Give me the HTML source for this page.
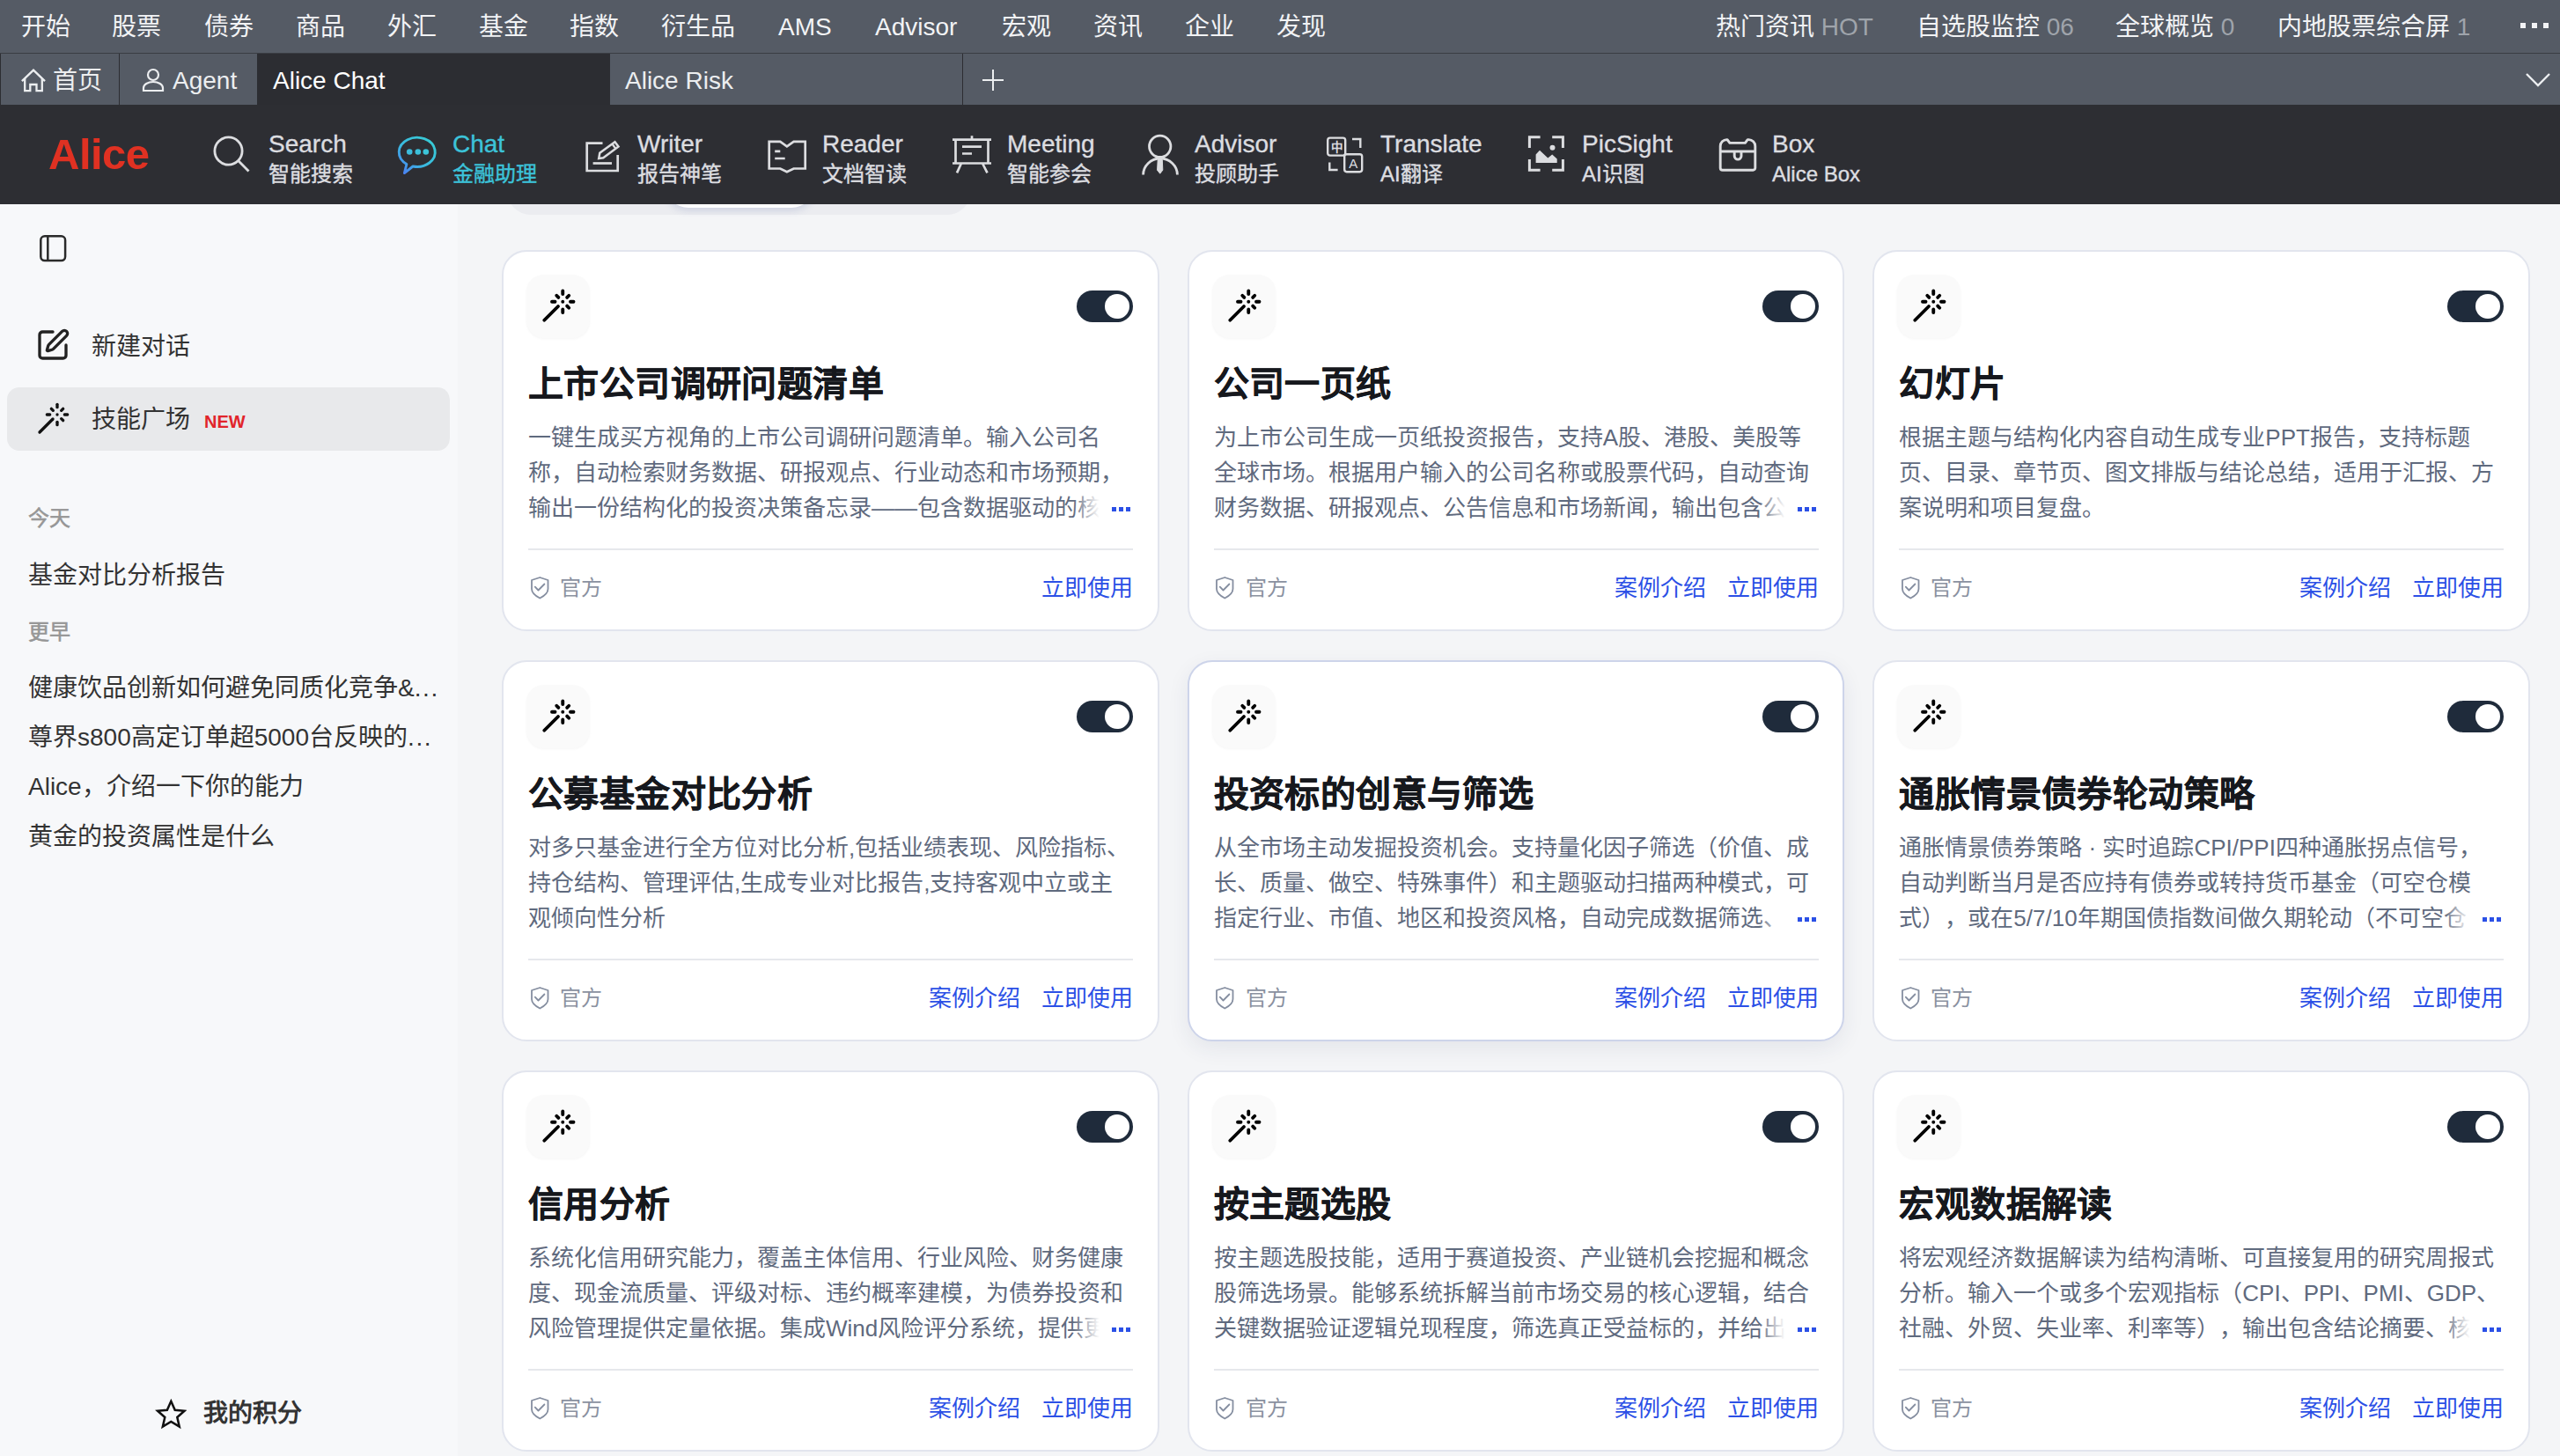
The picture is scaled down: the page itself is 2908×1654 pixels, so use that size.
<!DOCTYPE html>
<html lang="zh-CN"><head><meta charset="utf-8"><style>
*{box-sizing:border-box;margin:0;padding:0}
html,body{width:2908px;height:1654px;overflow:hidden}
body{font-family:"Liberation Sans", sans-serif;background:#f4f5f7;position:relative;color:#333;text-spacing-trim:space-all}
.abs{position:absolute}
#top{position:absolute;left:0;top:0;width:2908px;height:60px;background:#555b65}
#top .mi{position:absolute;top:1px;height:60px;line-height:60px;font-size:28px;color:#f2f3f5;white-space:nowrap}
#top .num{color:#9fa4ab}
#tabs{position:absolute;z-index:5;left:0;top:60px;width:2908px;height:59px;background:#2c2d32;border-top:1px solid #3a3d43}
.tab{position:absolute;top:0;height:58px;background:#555b65;color:#eceef0;font-size:28px;line-height:62px;white-space:nowrap}
#tool{position:absolute;z-index:5;left:0;top:119px;width:2908px;height:113px;background:#2d2e33}
.ti{position:absolute;top:0;height:113px}
.ti svg{position:absolute}
.tt{position:absolute;font-size:28px;color:#e3e4e7;white-space:nowrap;line-height:32px;-webkit-text-stroke:0.35px currentColor}
.ts{position:absolute;font-size:24px;color:#e3e4e7;white-space:nowrap;line-height:28px;-webkit-text-stroke:0.4px currentColor}
#side{position:absolute;left:0;top:232px;width:520px;height:1422px;background:#f7f8fa}
.sitem{position:absolute;font-size:28px;color:#333;white-space:nowrap;line-height:36px}
.slabel{position:absolute;font-size:24px;color:#969696;white-space:nowrap;line-height:30px;-webkit-text-stroke:0.6px #969696}
.card{position:absolute;width:746.67px;height:433px;background:#fff;border:2px solid #e2e5ee;border-radius:28px}
.card.hover{border-color:#cdd4ea;box-shadow:0 8px 24px rgba(40,50,90,0.08)}
.ibox{position:absolute;left:26px;top:26px;width:72px;height:72px;border-radius:20px;background:#fafafa;box-shadow:0 1px 3px rgba(0,0,0,0.04)}
.ibox svg{position:absolute;left:15px;top:15px;width:42px;height:42px}
.tog{position:absolute;left:651px;top:44px;width:64px;height:36px;border-radius:18px;background:#1f2b3b}
.knob{position:absolute;right:4px;top:4px;width:28px;height:28px;border-radius:50%;background:#fff}
.ctitle{position:absolute;left:28px;top:122px;font-size:40px;font-weight:bold;color:#16181d;line-height:56px;white-space:nowrap;letter-spacing:0.4px;-webkit-text-stroke:0.4px #16181d}
.desc{position:absolute;left:28px;top:191px;width:687px}
.ln{font-size:26px;line-height:40px;color:#5f6a7e;white-space:nowrap;height:40px;position:relative;overflow:hidden}
.ln.last .txt{display:inline-block}
.fade{position:absolute;right:0;top:0;width:68px;height:40px;background:linear-gradient(90deg,rgba(255,255,255,0) 0,#fff 44%)}
.more{position:absolute;right:2px;top:19px;width:22px;height:6px}
.more i{position:absolute;top:0;width:5px;height:5px;background:#2b50e6}
.more i:nth-child(1){left:0} .more i:nth-child(2){left:8px} .more i:nth-child(3){left:16px}
.divider{position:absolute;left:28px;top:337px;width:687px;height:1.5px;background:#e6e8ec}
.foot{position:absolute;left:28px;top:362px;width:687px;height:40px}
.shield{position:absolute;left:-4.5px;top:-0.5px;width:40px;height:40px}
.shield svg{width:40px;height:40px;display:block}
.off{position:absolute;left:36px;top:0;font-size:24px;line-height:40px;color:#8a91a0}
.links{position:absolute;right:0;top:0;white-space:nowrap}
.lnk{font-size:26px;line-height:40px;color:#2b50e6;margin-left:24px}
</style></head><body>
<div id="top"><div class="mi" style="left:24px">开始</div><div class="mi" style="left:127px">股票</div><div class="mi" style="left:232px">债券</div><div class="mi" style="left:336px">商品</div><div class="mi" style="left:440px">外汇</div><div class="mi" style="left:544px">基金</div><div class="mi" style="left:647px">指数</div><div class="mi" style="left:751px">衍生品</div><div class="mi" style="left:884px">AMS</div><div class="mi" style="left:994px">Advisor</div><div class="mi" style="left:1138px">宏观</div><div class="mi" style="left:1242px">资讯</div><div class="mi" style="left:1346px">企业</div><div class="mi" style="left:1450px">发现</div><div class="mi" style="left:1949px">热门资讯 <span class="num">HOT</span></div><div class="mi" style="left:2177px">自选股监控 <span class="num">06</span></div><div class="mi" style="left:2403px">全球概览 <span class="num">0</span></div><div class="mi" style="left:2587px">内地股票综合屏 <span class="num">1</span></div><div class="abs" style="left:2863px;top:26px;width:6px;height:6px;background:#f2f3f5"></div><div class="abs" style="left:2876px;top:26px;width:6px;height:6px;background:#f2f3f5"></div><div class="abs" style="left:2889px;top:26px;width:6px;height:6px;background:#f2f3f5"></div></div><div id="tabs"><div class="tab" style="left:1px;width:134px"><svg class="abs" style="left:17px;top:11px" width="40" height="40" viewBox="0 0 40 40" fill="none" stroke="#eceef0" stroke-width="2.3" stroke-linejoin="miter"><path d="M6.9 20.1 20 7.6 33 20.1"/><path d="M10.2 17V31.1H16.3V24H23.5V31.1H29.8V17"/></svg><span class="abs" style="left:59px;top:0">首页</span></div><div class="tab" style="left:136px;width:156px"><svg class="abs" style="left:25px;top:16px" width="26" height="28" viewBox="0 0 26 28" fill="none" stroke="#eceef0" stroke-width="2.2"><circle cx="13" cy="8" r="6"/><path d="M2 26v-3c0-4 5-7 11-7s11 3 11 7v3z"/></svg><span class="abs" style="left:60px;top:0">Agent</span></div><div class="tab" style="left:292px;width:401px;background:transparent;color:#fff"><span class="abs" style="left:18px;top:0">Alice Chat</span></div><div class="tab" style="left:693px;width:400px"><span class="abs" style="left:17px;top:0">Alice Risk</span></div><div class="tab" style="left:1093px;width:1815px;border-left:1px solid #2c2d32"><svg class="abs" style="left:21px;top:17px" width="26" height="26" viewBox="0 0 26 26" stroke="#eceef0" stroke-width="2"><path d="M13 1v24M1 13h24"/></svg><svg class="abs" style="left:1774px;top:21px" width="30" height="18" viewBox="0 0 30 18" fill="none" stroke="#eceef0" stroke-width="2.4"><path d="M2 2l13 13L28 2"/></svg></div></div><div id="tool"><div class="abs" style="left:55px;top:28px;font-size:49px;font-weight:bold;color:#e03122;line-height:56px;letter-spacing:-0.5px">Alice</div><svg class="abs" style="left:236px;top:31px" width="56" height="56" viewBox="0 0 56 56" fill="none" stroke="#dcdde0" stroke-width="2.8"><circle cx="23.5" cy="21.5" r="15.6"/><path d="M34.6 32.6 46.5 44.5"/></svg><div class="tt" style="left:305px;top:29px;color:#dcdde0">Search</div><div class="ts" style="left:305px;top:65px;color:#dcdde0">智能搜索</div><svg class="abs" style="left:450px;top:31px" width="56" height="56" viewBox="0 0 56 56" fill="none" stroke="#dcdde0" stroke-width="2.8"><defs><linearGradient id="cg" x1="0.9" y1="0.1" x2="0.1" y2="1"><stop offset="0" stop-color="#38cad6"/><stop offset="0.55" stop-color="#3ab9df"/><stop offset="1" stop-color="#4b80f2"/></linearGradient></defs><path d="M11.9 36.4 9.4 46.6 19 39A20.5 16.6 0 1 0 11.9 36.4Z" stroke="url(#cg)" stroke-width="2.9" stroke-linejoin="round"/><circle cx="15.2" cy="22.5" r="3.3" fill="#3cbcdc" stroke="none"/><circle cx="24.8" cy="22.5" r="3.3" fill="#3cc0da" stroke="none"/><circle cx="33.8" cy="22.5" r="3.3" fill="#3cc4d8" stroke="none"/></svg><div class="tt" style="left:514px;top:29px;color:#3cc3d9">Chat</div><div class="ts" style="left:514px;top:65px;color:#3cc3d9">金融助理</div><svg class="abs" style="left:660px;top:31px" width="56" height="56" viewBox="0 0 56 56" fill="none" stroke="#dcdde0" stroke-width="2.8"><path d="M24.5 12.7H6.7V44H41.7V26" stroke-width="2.7"/><path d="M13.6 35.5H35" stroke-width="2.7"/><path d="M20.2 30 21.3 23.8 38.5 11.2 42.5 16.6 25.3 29.2Z" stroke-width="2.5" stroke-linejoin="miter"/><path d="M35.4 13.5 39.4 18.9" stroke-width="2.3"/></svg><div class="tt" style="left:724px;top:29px;color:#dcdde0">Writer</div><div class="ts" style="left:724px;top:65px;color:#dcdde0">报告神笔</div><svg class="abs" style="left:865px;top:31px" width="56" height="56" viewBox="0 0 56 56" fill="none" stroke="#dcdde0" stroke-width="2.8"><path d="M8.7 10.9H21.3L28.9 16.3 36.6 10.9H49.7V41.5H36.6L28.9 45.3 21.3 41.5H8.7Z" stroke-width="2.7" stroke-linejoin="miter"/><path d="M15.2 21.8H21.3M15.2 30H26.7" stroke-width="2.7"/></svg><div class="tt" style="left:934px;top:29px;color:#dcdde0">Reader</div><div class="ts" style="left:934px;top:65px;color:#dcdde0">文档智读</div><svg class="abs" style="left:1075px;top:31px" width="56" height="56" viewBox="0 0 56 56" fill="none" stroke="#dcdde0" stroke-width="2.8"><path d="M7 8.7H51M29 4.3V8.7M10.5 8.7V35.5M47.5 8.7V35.5M7 35.5H51M17 35.5 12 46.4M41 35.5 46.5 46.4M18 16.7H40M18 24.5H29" stroke-width="2.7"/></svg><div class="tt" style="left:1144px;top:29px;color:#dcdde0">Meeting</div><div class="ts" style="left:1144px;top:65px;color:#dcdde0">智能参会</div><svg class="abs" style="left:1290px;top:31px" width="56" height="56" viewBox="0 0 56 56" fill="none" stroke="#dcdde0" stroke-width="2.8"><circle cx="27.7" cy="16.3" r="12.2"/><path d="M8.6 48.6A19.4 18.6 0 0 1 47.4 48.6"/><path d="M25.2 31.5H30.3L30.8 43.2 27.7 47.2 24.6 43.2Z" fill="#dcdde0" stroke-width="1"/></svg><div class="tt" style="left:1357px;top:29px;color:#dcdde0">Advisor</div><div class="ts" style="left:1357px;top:65px;color:#dcdde0">投顾助手</div><svg class="abs" style="left:1500px;top:31px" width="56" height="56" viewBox="0 0 56 56" fill="none" stroke="#dcdde0" stroke-width="2.8"><rect x="8.2" y="6.6" width="20" height="20" rx="2.6" stroke-width="2.4"/><rect x="27.2" y="25.2" width="20" height="20" rx="2.6" fill="#2c2d32" stroke-width="2.4"/><path d="M36 8H45.3V18M10.3 34.4V43H19.6" stroke-width="2.4"/><text x="18.2" y="22" font-size="13.5" font-weight="bold" fill="#dcdde0" stroke="none" text-anchor="middle">中</text><text x="37.3" y="40.5" font-size="15" fill="#dcdde0" stroke="none" text-anchor="middle" font-family="Liberation Sans, sans-serif">A</text></svg><div class="tt" style="left:1568px;top:29px;color:#dcdde0">Translate</div><div class="ts" style="left:1568px;top:65px;color:#dcdde0">AI翻译</div><svg class="abs" style="left:1730px;top:31px" width="56" height="56" viewBox="0 0 56 56" fill="none" stroke="#dcdde0" stroke-width="2.8"><path d="M19.6 5.8H7.4V18M33.2 5.8H45.4V18M7.4 31V43.3H19.6M45.4 31V43.3H33.2" stroke-width="3" stroke-linejoin="miter"/><circle cx="33.5" cy="17.8" r="3" fill="#dcdde0" stroke="none"/><path d="M14.6 25.6 19 20.7 28.3 29.5 33.2 25.6 38.7 30.6V35H14.6Z" fill="#dcdde0" stroke="none"/></svg><div class="tt" style="left:1797px;top:29px;color:#dcdde0">PicSight</div><div class="ts" style="left:1797px;top:65px;color:#dcdde0">AI识图</div><svg class="abs" style="left:1945px;top:31px" width="56" height="56" viewBox="0 0 56 56" fill="none" stroke="#dcdde0" stroke-width="2.8"><path d="M9.2 22V40.8A2.5 2.5 0 0 0 11.7 43.3H46.3A2.5 2.5 0 0 0 48.8 40.8V15.9A7.3 7.3 0 0 0 41.5 8.6H40.2L37.4 12.4H19.9L17.1 8.6H16.5A7.3 7.3 0 0 0 9.2 15.9Z" stroke-width="2.9" stroke-linejoin="round"/><path d="M9.2 22H48.8" stroke-width="2.9"/><path d="M25.2 22V27.2A3.9 3.9 0 0 0 33 27.2V22" stroke-width="2.9"/></svg><div class="tt" style="left:2013px;top:29px;color:#dcdde0">Box</div><div class="ts" style="left:2013px;top:65px;color:#dcdde0">Alice Box</div></div><div class="abs" style="left:576px;top:190px;width:527px;height:54px;border-radius:27px;background:#ebecf0"></div><div class="abs" style="left:756px;top:184px;width:169px;height:52px;border-radius:26px;background:#fff;box-shadow:0 3px 8px rgba(80,100,160,0.20)"></div><div id="side"><svg class="abs" style="left:43px;top:34px" width="34" height="34" viewBox="0 0 34 34" fill="none" stroke="#2a2a2a" stroke-width="2.5"><rect x="3.3" y="2.3" width="27.8" height="27.8" rx="4.5"/><path d="M11.3 2.3v27.8"/></svg><svg class="abs" style="left:40px;top:140px" width="40" height="40" viewBox="0 0 24 24" fill="none" stroke="#222" stroke-width="2" stroke-linecap="round" stroke-linejoin="round"><path d="M12 3H5a2 2 0 0 0-2 2v14a2 2 0 0 0 2 2h14a2 2 0 0 0 2-2v-7"/><path d="M18.375 2.625a1 1 0 0 1 3 3l-9.013 9.014a2 2 0 0 1-.853.505l-2.873.84a.5.5 0 0 1-.62-.62l.84-2.873a2 2 0 0 1 .506-.852z"/></svg><div class="sitem" style="left:104px;top:144px">新建对话</div><div class="abs" style="left:8px;top:208px;width:503px;height:72px;border-radius:14px;background:#e8e9eb"></div><div class="abs" style="left:40px;top:224px;width:40px;height:40px"><svg viewBox="0 0 24 24" fill="none" stroke="#111" stroke-width="2" stroke-linecap="round" stroke-linejoin="round"><path d="M15 4V2"/><path d="M15 16v-2"/><path d="M8 9h2"/><path d="M20 9h2"/><path d="M17.8 11.8 19 13"/><path d="M15 9h.01"/><path d="M17.8 6.2 19 5"/><path d="m3 21 9-9"/><path d="M12.2 6.2 11 5"/></svg></div><div class="sitem" style="left:104px;top:227px">技能广场</div><div class="abs" style="left:232px;top:234px;font-size:20px;font-weight:bold;color:#e1252b;line-height:26px">NEW</div><div class="slabel" style="left:32px;top:342px">今天</div><div class="sitem" style="left:32px;top:404px">基金对比分析报告</div><div class="slabel" style="left:32px;top:471px">更早</div><div class="sitem" style="left:32px;top:532px">健康饮品创新如何避免同质化竞争&amp;<span style="letter-spacing:1.6px">...</span></div><div class="sitem" style="left:32px;top:588px">尊界s800高定订单超5000台反映的<span style="letter-spacing:1.6px">...</span></div><div class="sitem" style="left:32px;top:644px">Alice，介绍一下你的能力</div><div class="sitem" style="left:32px;top:701px">黄金的投资属性是什么</div><svg class="abs" style="left:175.5px;top:1355.7px" width="36.6" height="36.6" viewBox="0 0 24 24" fill="none" stroke="#111" stroke-width="1.65" stroke-linejoin="miter"><path d="M12 2.5l2.9 6.6 7.1.6-5.4 4.7 1.6 7-6.2-3.7-6.2 3.7 1.6-7L2 9.7l7.1-.6z"/></svg><div class="sitem" style="left:231px;top:1356px;font-weight:bold;color:#333">我的积分</div></div><div class="card" style="left:570px;top:284px"><div class="ibox"><svg viewBox="0 0 24 24" fill="none" stroke="#000" stroke-width="2.2" stroke-linecap="round" stroke-linejoin="round"><path d="M15 4V2"/><path d="M15 16v-2"/><path d="M8 9h2"/><path d="M20 9h2"/><path d="M17.8 11.8 19 13"/><path d="M15 9h.01"/><path d="M17.8 6.2 19 5"/><path d="m3 21 9-9"/><path d="M12.2 6.2 11 5"/></svg></div><div class="tog"><div class="knob"></div></div><div class="ctitle">上市公司调研问题清单</div><div class="desc"><div class="ln">一键生成买方视角的上市公司调研问题清单。输入公司名</div><div class="ln">称，自动检索财务数据、研报观点、行业动态和市场预期，</div><div class="ln last"><span class="txt">输出一份结构化的投资决策备忘录——包含数据驱动的核心</span><span class="fade"></span><span class="more"><i></i><i></i><i></i></span></div></div><div class="divider"></div><div class="foot"><span class="shield"><svg width="40" height="40" viewBox="0 0 40 40" fill="none" stroke="#858ea0" stroke-width="1.8" stroke-linecap="round" stroke-linejoin="round"><path d="M17.3 8 26.5 11V20.9C26.5 25.5 22 29 17.3 31.5 12.6 29 8 25.5 8 20.9V11Z"/><path d="M11.8 18.7 15.5 22.5 22.4 15.5"/></svg></span><span class="off">官方</span><span class="links"><span class="lnk">立即使用</span></span></div></div><div class="card" style="left:1348.67px;top:284px"><div class="ibox"><svg viewBox="0 0 24 24" fill="none" stroke="#000" stroke-width="2.2" stroke-linecap="round" stroke-linejoin="round"><path d="M15 4V2"/><path d="M15 16v-2"/><path d="M8 9h2"/><path d="M20 9h2"/><path d="M17.8 11.8 19 13"/><path d="M15 9h.01"/><path d="M17.8 6.2 19 5"/><path d="m3 21 9-9"/><path d="M12.2 6.2 11 5"/></svg></div><div class="tog"><div class="knob"></div></div><div class="ctitle">公司一页纸</div><div class="desc"><div class="ln">为上市公司生成一页纸投资报告，支持A股、港股、美股等</div><div class="ln">全球市场。根据用户输入的公司名称或股票代码，自动查询</div><div class="ln last"><span class="txt">财务数据、研报观点、公告信息和市场新闻，输出包含公司</span><span class="fade"></span><span class="more"><i></i><i></i><i></i></span></div></div><div class="divider"></div><div class="foot"><span class="shield"><svg width="40" height="40" viewBox="0 0 40 40" fill="none" stroke="#858ea0" stroke-width="1.8" stroke-linecap="round" stroke-linejoin="round"><path d="M17.3 8 26.5 11V20.9C26.5 25.5 22 29 17.3 31.5 12.6 29 8 25.5 8 20.9V11Z"/><path d="M11.8 18.7 15.5 22.5 22.4 15.5"/></svg></span><span class="off">官方</span><span class="links"><span class="lnk">案例介绍</span><span class="lnk">立即使用</span></span></div></div><div class="card" style="left:2127.33px;top:284px"><div class="ibox"><svg viewBox="0 0 24 24" fill="none" stroke="#000" stroke-width="2.2" stroke-linecap="round" stroke-linejoin="round"><path d="M15 4V2"/><path d="M15 16v-2"/><path d="M8 9h2"/><path d="M20 9h2"/><path d="M17.8 11.8 19 13"/><path d="M15 9h.01"/><path d="M17.8 6.2 19 5"/><path d="m3 21 9-9"/><path d="M12.2 6.2 11 5"/></svg></div><div class="tog"><div class="knob"></div></div><div class="ctitle">幻灯片</div><div class="desc"><div class="ln">根据主题与结构化内容自动生成专业PPT报告，支持标题</div><div class="ln">页、目录、章节页、图文排版与结论总结，适用于汇报、方</div><div class="ln">案说明和项目复盘。</div></div><div class="divider"></div><div class="foot"><span class="shield"><svg width="40" height="40" viewBox="0 0 40 40" fill="none" stroke="#858ea0" stroke-width="1.8" stroke-linecap="round" stroke-linejoin="round"><path d="M17.3 8 26.5 11V20.9C26.5 25.5 22 29 17.3 31.5 12.6 29 8 25.5 8 20.9V11Z"/><path d="M11.8 18.7 15.5 22.5 22.4 15.5"/></svg></span><span class="off">官方</span><span class="links"><span class="lnk">案例介绍</span><span class="lnk">立即使用</span></span></div></div><div class="card" style="left:570px;top:750px"><div class="ibox"><svg viewBox="0 0 24 24" fill="none" stroke="#000" stroke-width="2.2" stroke-linecap="round" stroke-linejoin="round"><path d="M15 4V2"/><path d="M15 16v-2"/><path d="M8 9h2"/><path d="M20 9h2"/><path d="M17.8 11.8 19 13"/><path d="M15 9h.01"/><path d="M17.8 6.2 19 5"/><path d="m3 21 9-9"/><path d="M12.2 6.2 11 5"/></svg></div><div class="tog"><div class="knob"></div></div><div class="ctitle">公募基金对比分析</div><div class="desc"><div class="ln">对多只基金进行全方位对比分析,包括业绩表现、风险指标、</div><div class="ln">持仓结构、管理评估,生成专业对比报告,支持客观中立或主</div><div class="ln">观倾向性分析</div></div><div class="divider"></div><div class="foot"><span class="shield"><svg width="40" height="40" viewBox="0 0 40 40" fill="none" stroke="#858ea0" stroke-width="1.8" stroke-linecap="round" stroke-linejoin="round"><path d="M17.3 8 26.5 11V20.9C26.5 25.5 22 29 17.3 31.5 12.6 29 8 25.5 8 20.9V11Z"/><path d="M11.8 18.7 15.5 22.5 22.4 15.5"/></svg></span><span class="off">官方</span><span class="links"><span class="lnk">案例介绍</span><span class="lnk">立即使用</span></span></div></div><div class="card hover" style="left:1348.67px;top:750px"><div class="ibox"><svg viewBox="0 0 24 24" fill="none" stroke="#000" stroke-width="2.2" stroke-linecap="round" stroke-linejoin="round"><path d="M15 4V2"/><path d="M15 16v-2"/><path d="M8 9h2"/><path d="M20 9h2"/><path d="M17.8 11.8 19 13"/><path d="M15 9h.01"/><path d="M17.8 6.2 19 5"/><path d="m3 21 9-9"/><path d="M12.2 6.2 11 5"/></svg></div><div class="tog"><div class="knob"></div></div><div class="ctitle">投资标的创意与筛选</div><div class="desc"><div class="ln">从全市场主动发掘投资机会。支持量化因子筛选（价值、成</div><div class="ln">长、质量、做空、特殊事件）和主题驱动扫描两种模式，可</div><div class="ln last"><span class="txt">指定行业、市值、地区和投资风格，自动完成数据筛选、评</span><span class="fade"></span><span class="more"><i></i><i></i><i></i></span></div></div><div class="divider"></div><div class="foot"><span class="shield"><svg width="40" height="40" viewBox="0 0 40 40" fill="none" stroke="#858ea0" stroke-width="1.8" stroke-linecap="round" stroke-linejoin="round"><path d="M17.3 8 26.5 11V20.9C26.5 25.5 22 29 17.3 31.5 12.6 29 8 25.5 8 20.9V11Z"/><path d="M11.8 18.7 15.5 22.5 22.4 15.5"/></svg></span><span class="off">官方</span><span class="links"><span class="lnk">案例介绍</span><span class="lnk">立即使用</span></span></div></div><div class="card" style="left:2127.33px;top:750px"><div class="ibox"><svg viewBox="0 0 24 24" fill="none" stroke="#000" stroke-width="2.2" stroke-linecap="round" stroke-linejoin="round"><path d="M15 4V2"/><path d="M15 16v-2"/><path d="M8 9h2"/><path d="M20 9h2"/><path d="M17.8 11.8 19 13"/><path d="M15 9h.01"/><path d="M17.8 6.2 19 5"/><path d="m3 21 9-9"/><path d="M12.2 6.2 11 5"/></svg></div><div class="tog"><div class="knob"></div></div><div class="ctitle">通胀情景债券轮动策略</div><div class="desc"><div class="ln">通胀情景债券策略 · 实时追踪CPI/PPI四种通胀拐点信号，</div><div class="ln">自动判断当月是否应持有债券或转持货币基金（可空仓模</div><div class="ln last"><span class="txt">式），或在5/7/10年期国债指数间做久期轮动（不可空仓</span><span class="fade"></span><span class="more"><i></i><i></i><i></i></span></div></div><div class="divider"></div><div class="foot"><span class="shield"><svg width="40" height="40" viewBox="0 0 40 40" fill="none" stroke="#858ea0" stroke-width="1.8" stroke-linecap="round" stroke-linejoin="round"><path d="M17.3 8 26.5 11V20.9C26.5 25.5 22 29 17.3 31.5 12.6 29 8 25.5 8 20.9V11Z"/><path d="M11.8 18.7 15.5 22.5 22.4 15.5"/></svg></span><span class="off">官方</span><span class="links"><span class="lnk">案例介绍</span><span class="lnk">立即使用</span></span></div></div><div class="card" style="left:570px;top:1216px"><div class="ibox"><svg viewBox="0 0 24 24" fill="none" stroke="#000" stroke-width="2.2" stroke-linecap="round" stroke-linejoin="round"><path d="M15 4V2"/><path d="M15 16v-2"/><path d="M8 9h2"/><path d="M20 9h2"/><path d="M17.8 11.8 19 13"/><path d="M15 9h.01"/><path d="M17.8 6.2 19 5"/><path d="m3 21 9-9"/><path d="M12.2 6.2 11 5"/></svg></div><div class="tog"><div class="knob"></div></div><div class="ctitle">信用分析</div><div class="desc"><div class="ln">系统化信用研究能力，覆盖主体信用、行业风险、财务健康</div><div class="ln">度、现金流质量、评级对标、违约概率建模，为债券投资和</div><div class="ln last"><span class="txt">风险管理提供定量依据。集成Wind风险评分系统，提供更</span><span class="fade"></span><span class="more"><i></i><i></i><i></i></span></div></div><div class="divider"></div><div class="foot"><span class="shield"><svg width="40" height="40" viewBox="0 0 40 40" fill="none" stroke="#858ea0" stroke-width="1.8" stroke-linecap="round" stroke-linejoin="round"><path d="M17.3 8 26.5 11V20.9C26.5 25.5 22 29 17.3 31.5 12.6 29 8 25.5 8 20.9V11Z"/><path d="M11.8 18.7 15.5 22.5 22.4 15.5"/></svg></span><span class="off">官方</span><span class="links"><span class="lnk">案例介绍</span><span class="lnk">立即使用</span></span></div></div><div class="card" style="left:1348.67px;top:1216px"><div class="ibox"><svg viewBox="0 0 24 24" fill="none" stroke="#000" stroke-width="2.2" stroke-linecap="round" stroke-linejoin="round"><path d="M15 4V2"/><path d="M15 16v-2"/><path d="M8 9h2"/><path d="M20 9h2"/><path d="M17.8 11.8 19 13"/><path d="M15 9h.01"/><path d="M17.8 6.2 19 5"/><path d="m3 21 9-9"/><path d="M12.2 6.2 11 5"/></svg></div><div class="tog"><div class="knob"></div></div><div class="ctitle">按主题选股</div><div class="desc"><div class="ln">按主题选股技能，适用于赛道投资、产业链机会挖掘和概念</div><div class="ln">股筛选场景。能够系统拆解当前市场交易的核心逻辑，结合</div><div class="ln last"><span class="txt">关键数据验证逻辑兑现程度，筛选真正受益标的，并给出</span><span class="fade"></span><span class="more"><i></i><i></i><i></i></span></div></div><div class="divider"></div><div class="foot"><span class="shield"><svg width="40" height="40" viewBox="0 0 40 40" fill="none" stroke="#858ea0" stroke-width="1.8" stroke-linecap="round" stroke-linejoin="round"><path d="M17.3 8 26.5 11V20.9C26.5 25.5 22 29 17.3 31.5 12.6 29 8 25.5 8 20.9V11Z"/><path d="M11.8 18.7 15.5 22.5 22.4 15.5"/></svg></span><span class="off">官方</span><span class="links"><span class="lnk">案例介绍</span><span class="lnk">立即使用</span></span></div></div><div class="card" style="left:2127.33px;top:1216px"><div class="ibox"><svg viewBox="0 0 24 24" fill="none" stroke="#000" stroke-width="2.2" stroke-linecap="round" stroke-linejoin="round"><path d="M15 4V2"/><path d="M15 16v-2"/><path d="M8 9h2"/><path d="M20 9h2"/><path d="M17.8 11.8 19 13"/><path d="M15 9h.01"/><path d="M17.8 6.2 19 5"/><path d="m3 21 9-9"/><path d="M12.2 6.2 11 5"/></svg></div><div class="tog"><div class="knob"></div></div><div class="ctitle">宏观数据解读</div><div class="desc"><div class="ln">将宏观经济数据解读为结构清晰、可直接复用的研究周报式</div><div class="ln">分析。输入一个或多个宏观指标（CPI、PPI、PMI、GDP、</div><div class="ln last"><span class="txt">社融、外贸、失业率、利率等），输出包含结论摘要、核心</span><span class="fade"></span><span class="more"><i></i><i></i><i></i></span></div></div><div class="divider"></div><div class="foot"><span class="shield"><svg width="40" height="40" viewBox="0 0 40 40" fill="none" stroke="#858ea0" stroke-width="1.8" stroke-linecap="round" stroke-linejoin="round"><path d="M17.3 8 26.5 11V20.9C26.5 25.5 22 29 17.3 31.5 12.6 29 8 25.5 8 20.9V11Z"/><path d="M11.8 18.7 15.5 22.5 22.4 15.5"/></svg></span><span class="off">官方</span><span class="links"><span class="lnk">案例介绍</span><span class="lnk">立即使用</span></span></div></div></body></html>
